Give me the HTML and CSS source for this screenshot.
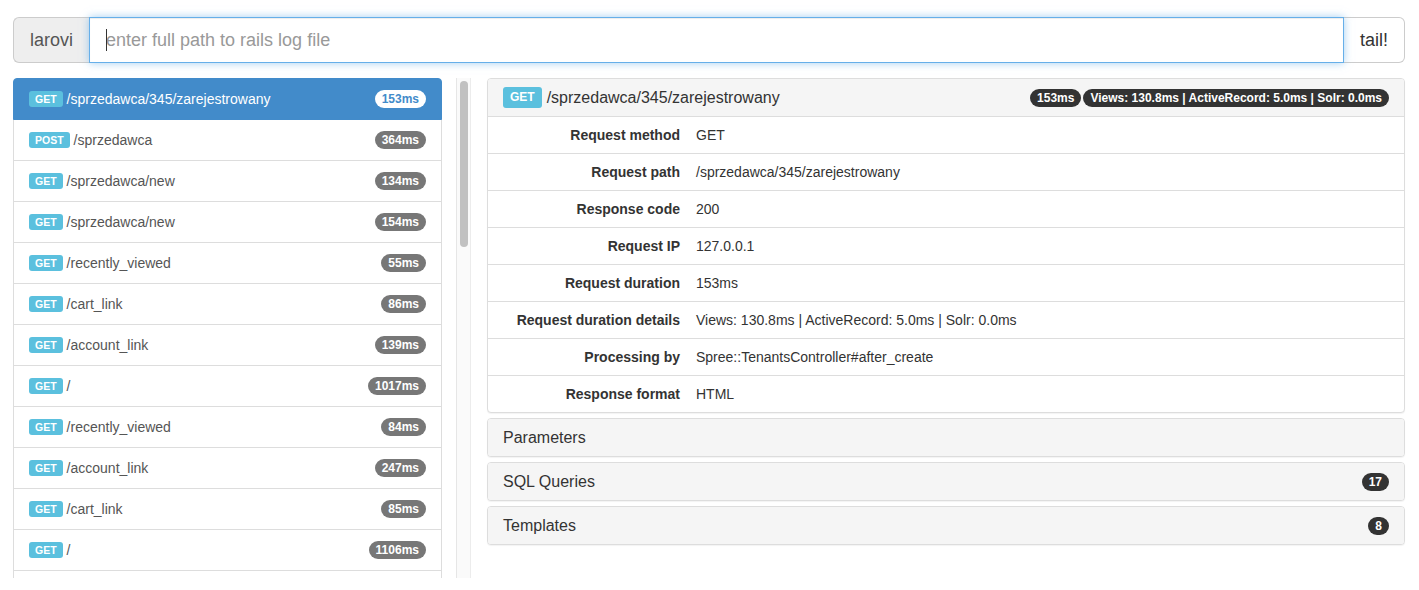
FILE: index.html
```html
<!DOCTYPE html>
<html>
<head>
<meta charset="utf-8">
<title>larovi</title>
<link rel="stylesheet" href="styles.css">
</head>
<body>
<div class="page">
  <div class="input-group">
    <span class="addon">larovi</span>
    <div class="input-wrap">
      <input class="path-input" type="text" placeholder="enter full path to rails log file">
      <span class="caret"></span>
    </div>
    <button class="btn-tail">tail!</button>
  </div>

  <div class="main">
    <div class="left">
      <div class="list-wrap">
        <div class="list">
          <div class="item active"><span class="lbl">GET</span><span class="path">/sprzedawca/345/zarejestrowany</span><span class="badge">153ms</span></div>
          <div class="item"><span class="lbl">POST</span><span class="path">/sprzedawca</span><span class="badge">364ms</span></div>
          <div class="item"><span class="lbl">GET</span><span class="path">/sprzedawca/new</span><span class="badge">134ms</span></div>
          <div class="item"><span class="lbl">GET</span><span class="path">/sprzedawca/new</span><span class="badge">154ms</span></div>
          <div class="item"><span class="lbl">GET</span><span class="path">/recently_viewed</span><span class="badge">55ms</span></div>
          <div class="item"><span class="lbl">GET</span><span class="path">/cart_link</span><span class="badge">86ms</span></div>
          <div class="item"><span class="lbl">GET</span><span class="path">/account_link</span><span class="badge">139ms</span></div>
          <div class="item"><span class="lbl">GET</span><span class="path">/</span><span class="badge">1017ms</span></div>
          <div class="item"><span class="lbl">GET</span><span class="path">/recently_viewed</span><span class="badge">84ms</span></div>
          <div class="item"><span class="lbl">GET</span><span class="path">/account_link</span><span class="badge">247ms</span></div>
          <div class="item"><span class="lbl">GET</span><span class="path">/cart_link</span><span class="badge">85ms</span></div>
          <div class="item"><span class="lbl">GET</span><span class="path">/</span><span class="badge">1106ms</span></div>
          <div class="item"></div>
        </div>
      </div>
      <div class="scrollbar"><div class="thumb"></div></div>
    </div>

    <div class="right">
      <div class="panel detail">
        <div class="panel-heading head-main">
          <span class="lbl lbl-lg">GET</span>
          <span class="title">/sprzedawca/345/zarejestrowany</span>
          <span class="head-badges">
            <span class="badge dark">153ms</span>
            <span class="badge dark">Views: 130.8ms | ActiveRecord: 5.0ms | Solr: 0.0ms</span>
          </span>
        </div>
        <table class="info">
          <tr><td class="k">Request method</td><td class="v">GET</td></tr>
          <tr><td class="k">Request path</td><td class="v">/sprzedawca/345/zarejestrowany</td></tr>
          <tr><td class="k">Response code</td><td class="v">200</td></tr>
          <tr><td class="k">Request IP</td><td class="v">127.0.0.1</td></tr>
          <tr><td class="k">Request duration</td><td class="v">153ms</td></tr>
          <tr><td class="k">Request duration details</td><td class="v">Views: 130.8ms | ActiveRecord: 5.0ms | Solr: 0.0ms</td></tr>
          <tr><td class="k">Processing by</td><td class="v">Spree::TenantsController#after_create</td></tr>
          <tr><td class="k">Response format</td><td class="v">HTML</td></tr>
        </table>
      </div>
      <div class="panel small">
        <div class="panel-heading"><span class="ptitle">Parameters</span></div>
      </div>
      <div class="panel small">
        <div class="panel-heading"><span class="ptitle">SQL Queries</span><span class="badge dark">17</span></div>
      </div>
      <div class="panel small">
        <div class="panel-heading"><span class="ptitle">Templates</span><span class="badge dark">8</span></div>
      </div>
    </div>
  </div>
</div>
</body>
</html>
```

FILE: styles.css
```css
* { box-sizing: border-box; }
html, body { margin: 0; padding: 0; background: #fff; }
body {
  font-family: "Liberation Sans", Arial, sans-serif;
  font-size: 14px;
  line-height: 20px;
  color: #333;
}
.page { padding: 17px 14px 0 13px; }

/* input group */
.input-group { display: flex; height: 46px; }
.addon {
  display: flex; align-items: center;
  padding: 0 16px;
  font-size: 18px;
  color: #555;
  background: #eee;
  border: 1px solid #ccc;
  border-right: 0;
  border-radius: 6px 0 0 6px;
}
.input-wrap { flex: 1; position: relative; display: flex; }
.path-input {
  flex: 1;
  height: 46px;
  padding: 10px 16px;
  font-family: "Liberation Sans", Arial, sans-serif;
  font-size: 18px;
  color: #555;
  border: 1px solid #66afe9;
  outline: none;
  box-shadow: inset 0 1px 1px rgba(0,0,0,.075), 0 0 8px rgba(102,175,233,.6);
  border-radius: 0;
  position: relative;
  z-index: 1;
}
.path-input::placeholder { color: #999; }
.caret {
  position: absolute; left: 17px; top: 12px;
  width: 1px; height: 22px; background: #333; z-index: 2;
}
.btn-tail {
  font-family: "Liberation Sans", Arial, sans-serif;
  font-size: 18px;
  color: #333;
  background: #fff;
  border: 1px solid #ccc;
  border-left: 0;
  border-radius: 0 6px 6px 0;
  padding: 0 16px;
  height: 46px;
}

/* main */
.main { display: flex; gap: 16px; margin-top: 15px; }
.left { display: flex; width: 458px; flex: none; }
.list-wrap { width: 429px; height: 500px; overflow: hidden; }
.list { display: flex; flex-direction: column; }
.item {
  display: flex; align-items: center;
  padding: 10px 15px;
  border: 1px solid #ddd;
  margin-bottom: -1px;
  color: #555;
  background: #fff;
  height: 42px;
  flex: none;
}
.item:first-child { border-radius: 4px 4px 0 0; }
.item.active { background: #428bca; border-color: #428bca; color: #fff; position: relative; z-index: 1; }
.lbl {
  display: inline-block;
  background: #5bc0de;
  color: #fff;
  font-weight: bold;
  font-size: 10.5px;
  line-height: 1;
  padding: 3px 6px 3px;
  border-radius: 3px;
  margin-right: 4px;
}
.path { flex: 1; }
.badge {
  display: inline-block;
  background: #777;
  color: #fff;
  font-weight: bold;
  font-size: 12px;
  line-height: 12px;
  padding: 3px 7px;
  border-radius: 10px;
  white-space: nowrap;
}
.item.active .badge { background: #fff; color: #428bca; }

.scrollbar {
  margin-left: 14px;
  width: 15px;
  height: 500px;
  background: #fafafa;
  border-left: 1px solid #e6e6e6;
  border-right: 1px solid #ececec;
  padding: 3px 2px 0 3px;
}
.thumb { width: 8px; height: 166px; background: #c1c1c1; border-radius: 4px; }

/* right */
.right { flex: 1; min-width: 0; display: flex; flex-direction: column; gap: 5px; }
.panel {
  border: 1px solid #ddd;
  border-radius: 4px;
  background: #fff;
  box-shadow: 0 1px 1px rgba(0,0,0,.05);
  overflow: hidden;
}
.panel-heading {
  display: flex; align-items: center;
  background: #f5f5f5;
  padding: 0 15px;
  height: 37px;
}
.head-main { height: 38px; padding: 8px 15px; border-bottom: 1px solid #ddd; }
.lbl-lg { font-size: 12px; padding: 4px 7px 5px; margin-right: 5px; }
.title { font-size: 16px; color: #333; flex: 1; }
.head-badges { display: flex; gap: 2px; }
.badge.dark { background: #333; }
.ptitle { font-size: 16px; color: #333; flex: 1; }

.info { width: 100%; border-collapse: collapse; table-layout: fixed; }
.info td { padding: 8px; line-height: 20px; border-top: 1px solid #ddd; color: #333; }
.info tr:first-child td { border-top: 0; }
.info td.k { width: 200px; text-align: right; font-weight: bold; }
```
